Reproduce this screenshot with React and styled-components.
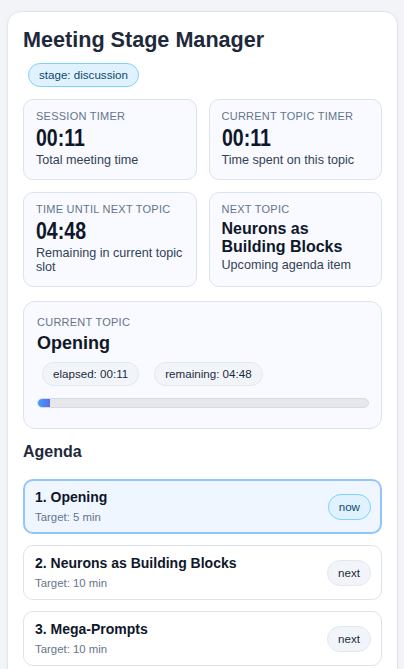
import styled, { createGlobalStyle } from "styled-components";

const GlobalStyle = createGlobalStyle`
  body {
    margin: 0;
    background: #f3f4f8;
    font-family: "Liberation Sans", Arial, sans-serif;
    color: #0f172a;
  }
  * { box-sizing: border-box; }
`;

const Page = styled.div`
  padding: 11px 6px 0 7px;
`;

const Card = styled.div`
  background: #fff;
  border: 1px solid #e0e4ec;
  border-radius: 14px;
  padding: 15px 15px 16px;
  box-shadow: 0 1px 3px rgba(15, 23, 42, 0.04);
`;

const Title = styled.h1`
  margin: 0 0 10px;
  font-size: 21.6px;
  line-height: 26px;
  font-weight: 700;
  color: #1e293b;
`;

const Badge = styled.span`
  display: inline-block;
  height: 24px;
  line-height: 22px;
  padding: 0 10px;
  margin-left: ${(p) => p.$indent || 0}px;
  border-radius: 999px;
  font-size: 11.6px;
  color: ${(p) => (p.$tone === "blue" ? "#0c4a6e" : "#1e293b")};
  background: ${(p) => (p.$tone === "blue" ? "#e0f2fe" : "#f1f5f9")};
  border: 1px solid ${(p) => (p.$tone === "blue" ? "#7dd3fc" : "#e2e8f0")};
  white-space: nowrap;
`;

const StatGrid = styled.div`
  display: grid;
  grid-template-columns: 1fr 1fr;
  gap: 12px;
  margin-top: 12px;
`;

const StatBox = styled.div`
  background: #f8faff;
  border: 1px solid #dde3ec;
  border-radius: 10px;
  padding: 10px 12px 12px;
`;

const Label = styled.div`
  font-size: 11px;
  line-height: 13px;
  text-transform: uppercase;
  letter-spacing: 0.25px;
  color: #64748b;
`;

const Value = styled.div`
  margin-top: 3px;
  font-size: 23px;
  line-height: 25px;
  font-weight: 700;
  color: #0f172a;
`;

/* the timer digits in the reference are a condensed face */
const Digits = styled.span`
  display: inline-block;
  transform: scaleX(0.85);
  transform-origin: left center;
`;

const TextValue = styled.div`
  margin-top: 4px;
  font-size: 16px;
  line-height: 18px;
  font-weight: 700;
  color: #0f172a;
`;

const Sub = styled.div`
  margin-top: 2px;
  font-size: 12.6px;
  line-height: 14px;
  color: #334155;
`;

const TopicBox = styled.div`
  margin-top: 14px;
  background: #f8faff;
  border: 1px solid #dde3ec;
  border-radius: 12px;
  padding: 14px 12px 14px 13px;
`;

const TopicName = styled.div`
  margin-top: 3px;
  font-size: 18px;
  line-height: 22px;
  font-weight: 700;
  color: #111827;
`;

const PillRow = styled.div`
  display: flex;
  gap: 15px;
  padding-left: 5px;
  margin-top: 8px;
`;

const Track = styled.div`
  height: 10px;
  margin: 12px 0 6px;
  border-radius: 999px;
  background: #e5e7eb;
  border: 1px solid #d7dbe2;
  overflow: hidden;
`;

const Fill = styled.div`
  height: 100%;
  background: linear-gradient(90deg, #3ba0f8, #5b6cf0);
  border-radius: 999px 0 0 999px;
`;

const SectionTitle = styled.h2`
  margin: 13px 0 18px;
  font-size: 16px;
  line-height: 19px;
  font-weight: 700;
  color: #1e293b;
`;

const AgendaList = styled.div`
  display: flex;
  flex-direction: column;
  gap: 11px;
`;

const AgendaItem = styled.div`
  display: flex;
  align-items: center;
  justify-content: space-between;
  border-radius: 10px;
  background: ${(p) => (p.$active ? "#eff6ff" : "#fff")};
  border: ${(p) => (p.$active ? "2px solid #93c5fd" : "1px solid #dde3ec")};
  padding: ${(p) => (p.$active ? "8px 9px 8px 10px" : "9px 10px 9px 11px")};
`;

const ItemTitle = styled.div`
  font-size: 14px;
  line-height: 17px;
  font-weight: 700;
  color: #0f172a;
`;

const ItemMeta = styled.div`
  margin-top: 4px;
  font-size: 11.4px;
  line-height: 14px;
  color: #64748b;
`;

const StatusBadge = styled.span`
  display: inline-block;
  padding: 4px 10px;
  line-height: 16px;
  font-size: 11.6px;
  border-radius: 999px;
  color: ${(p) => (p.$now ? "#0c4a6e" : "#1e293b")};
  background: ${(p) => (p.$now ? "#e0f2fe" : "#f1f5f9")};
  border: 1px solid ${(p) => (p.$now ? "#7dd3fc" : "#e2e8f0")};
`;

const stats = [
  { label: "Session timer", value: "00:11", sub: "Total meeting time" },
  { label: "Current topic timer", value: "00:11", sub: "Time spent on this topic" },
  { label: "Time until next topic", value: "04:48", sub: "Remaining in current topic slot" },
  { label: "Next topic", value: "Neurons as Building Blocks", sub: "Upcoming agenda item", text: true },
];

const agenda = [
  { title: "1. Opening", target: "Target: 5 min", status: "now" },
  { title: "2. Neurons as Building Blocks", target: "Target: 10 min", status: "next" },
  { title: "3. Mega-Prompts", target: "Target: 10 min", status: "next" },
];

export default function App() {
  const progress = (11 / 300) * 100;
  return (
    <>
      <GlobalStyle />
      <Page>
        <Card>
          <Title>Meeting Stage Manager</Title>
          <Badge $tone="blue" $indent={5}>stage: discussion</Badge>

          <StatGrid>
            {stats.map((s) => (
              <StatBox key={s.label}>
                <Label>{s.label}</Label>
                {s.text ? (
                  <TextValue>{s.value}</TextValue>
                ) : (
                  <Value>
                    <Digits>{s.value}</Digits>
                  </Value>
                )}
                <Sub>{s.sub}</Sub>
              </StatBox>
            ))}
          </StatGrid>

          <TopicBox>
            <Label>Current topic</Label>
            <TopicName>Opening</TopicName>
            <PillRow>
              <Badge>elapsed: 00:11</Badge>
              <Badge>remaining: 04:48</Badge>
            </PillRow>
            <Track>
              <Fill style={{ width: `${progress}%` }} />
            </Track>
          </TopicBox>

          <SectionTitle>Agenda</SectionTitle>
          <AgendaList>
            {agenda.map((a) => (
              <AgendaItem key={a.title} $active={a.status === "now"}>
                <div>
                  <ItemTitle>{a.title}</ItemTitle>
                  <ItemMeta>{a.target}</ItemMeta>
                </div>
                <StatusBadge $now={a.status === "now"}>{a.status}</StatusBadge>
              </AgendaItem>
            ))}
          </AgendaList>
        </Card>
      </Page>
    </>
  );
}
